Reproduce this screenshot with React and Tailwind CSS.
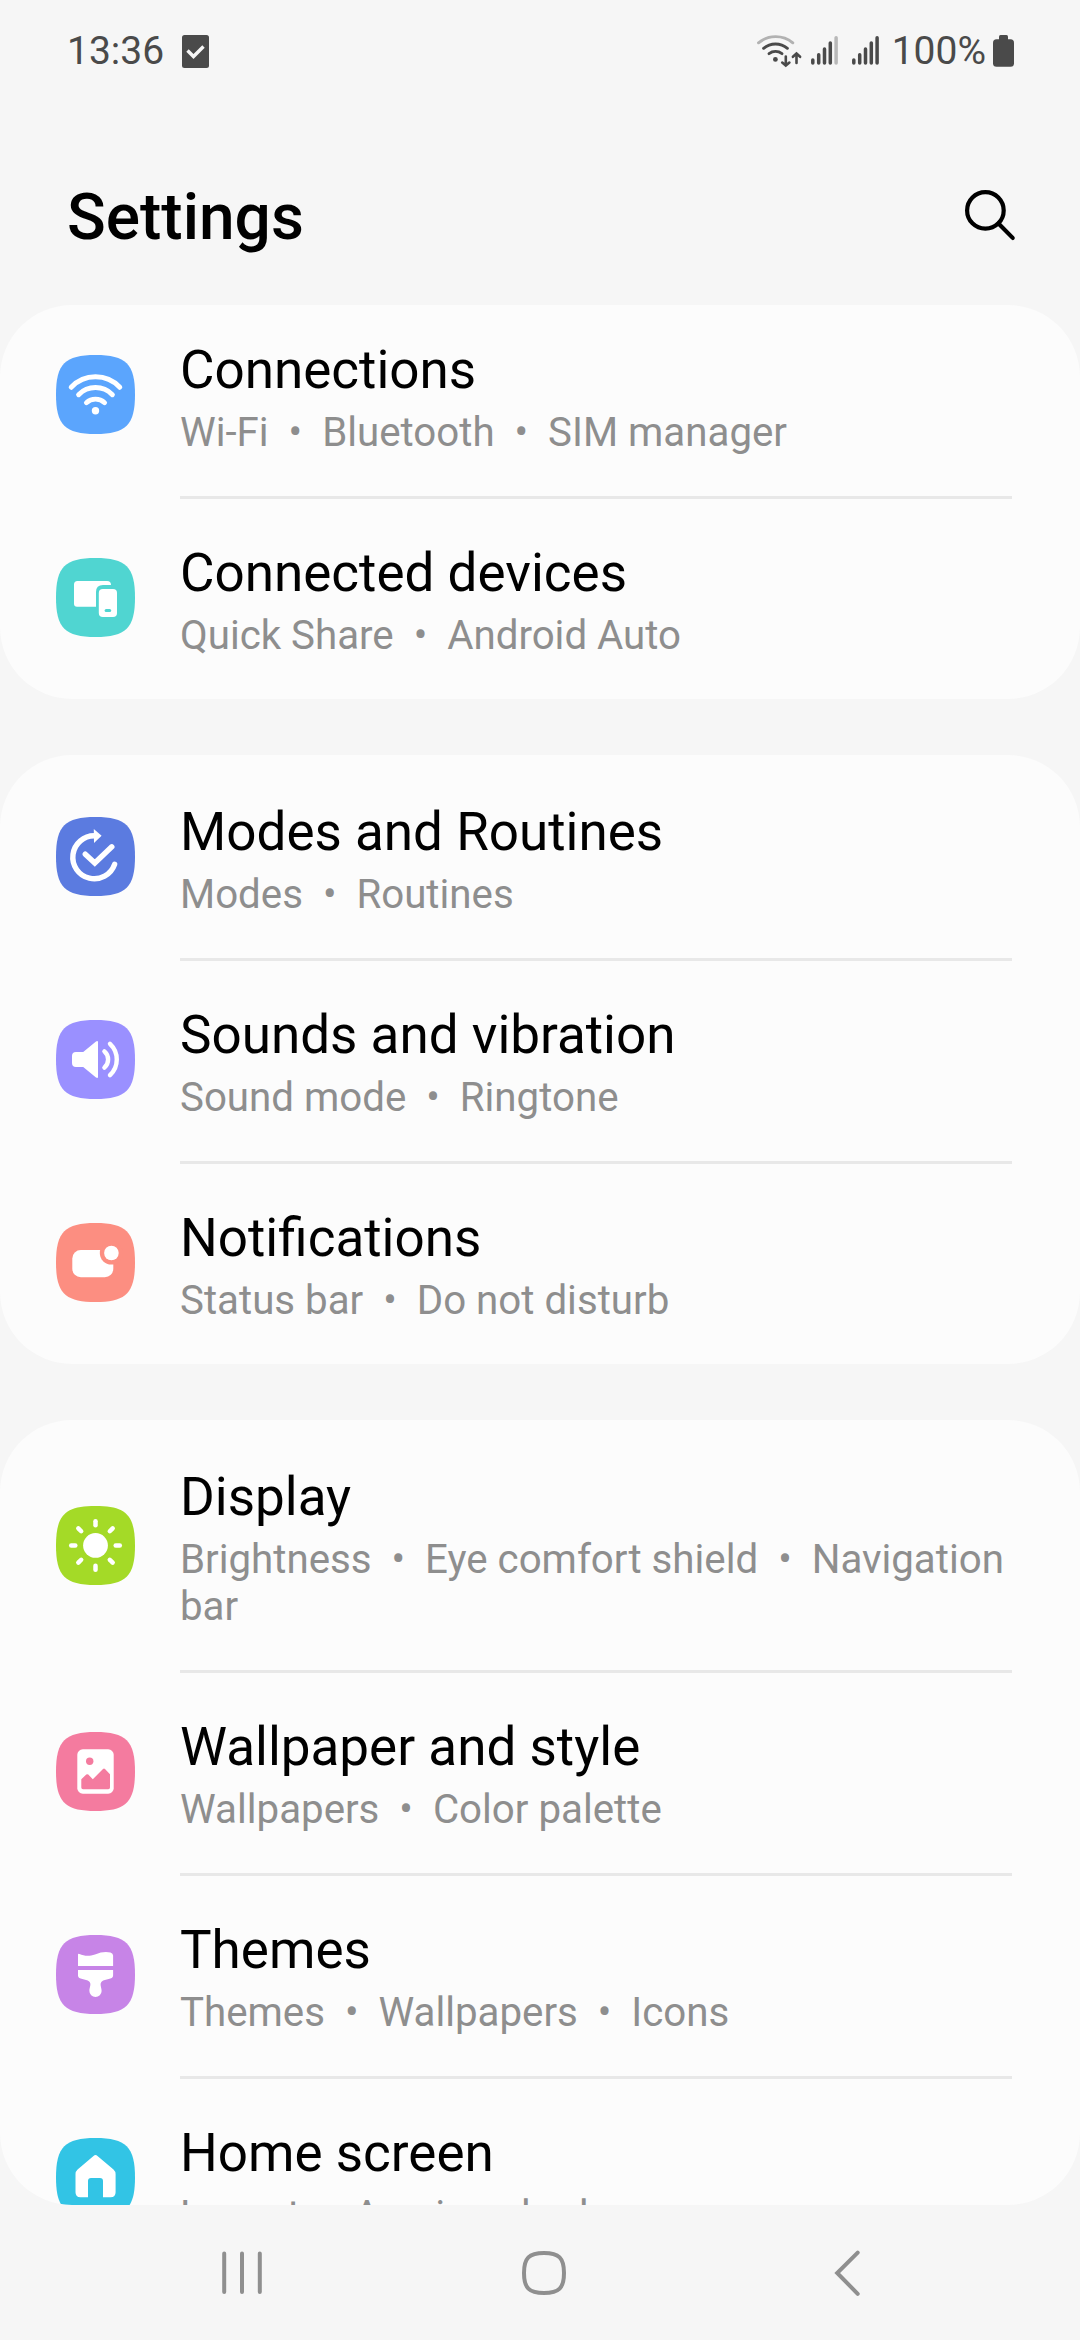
const SECTIONS = [
  {
    id: 'connections',
    items: [
      { title: 'Connections', tags: ['Wi-Fi', 'Bluetooth', 'SIM manager'], color: 'text-[#5ba5fd]', icon: WifiGlyph },
      { title: 'Connected devices', tags: ['Quick Share', 'Android Auto'], color: 'text-[#50d5d1]', icon: DevicesGlyph },
    ],
  },
  {
    id: 'modes',
    items: [
      { title: 'Modes and Routines', tags: ['Modes', 'Routines'], color: 'text-[#5b7be0]', icon: RoutineGlyph },
      { title: 'Sounds and vibration', tags: ['Sound mode', 'Ringtone'], color: 'text-[#9a90ff]', icon: SoundGlyph },
      { title: 'Notifications', tags: ['Status bar', 'Do not disturb'], color: 'text-[#fc8e81]', icon: NotificationGlyph },
    ],
  },
  {
    id: 'display',
    items: [
      { title: 'Display', tags: ['Brightness', 'Eye comfort shield', 'Navigation bar'], color: 'text-[#a4da27]', icon: SunGlyph },
      { title: 'Wallpaper and style', tags: ['Wallpapers', 'Color palette'], color: 'text-[#f47b9f]', icon: WallpaperGlyph },
      { title: 'Themes', tags: ['Themes', 'Wallpapers', 'Icons'], color: 'text-[#c784e7]', icon: BrushGlyph },
      { title: 'Home screen', tags: ['Layout', 'App icon badges'], color: 'text-[#32c4e5]', icon: HomeGlyph },
    ],
  },
];

// The glyphs share a 79x79 box. currentColor is the tile colour, used for cut-outs.

function WifiGlyph() {
  return (
    <>
      <g fill="none" stroke="#fff" strokeWidth="4.9" strokeLinecap="round">
        <path d="M15.2 32.3A33.4 33.4 0 0 1 63.8 32.3" />
        <path d="M22.6 39.7A23.6 23.6 0 0 1 56.4 39.7" />
        <path d="M30.4 47.7A13.4 13.4 0 0 1 48.6 47.7" />
      </g>
      <circle cx="39.5" cy="55.7" r="3.7" fill="#fff" />
    </>
  );
}

function DevicesGlyph() {
  return (
    <>
      <path fill="#fff" d="M21.5 23H51q4 0 4 4h-8q-7 0-7 7v14.7H21q-3 0-3-3V26.5q0-3.5 3.5-3.5z" />
      <rect x="42.8" y="31" width="18.2" height="28" rx="4" fill="#fff" />
      <rect x="48.6" y="51" width="6.6" height="3" rx="1.5" fill="currentColor" />
    </>
  );
}

function RoutineGlyph() {
  return (
    <>
      <g fill="none" stroke="#fff" strokeWidth="5.4" strokeLinecap="round">
        <path d="M39 18.8A21.5 21.5 0 1 0 58.6 47.4" />
        <path d="M29.3 37.2L38.8 46L55.8 29.8" />
      </g>
      <path d="M37.8 12L45.6 18.8L38 26z" fill="#fff" />
    </>
  );
}

function SoundGlyph() {
  return (
    <>
      <path fill="#fff" d="M20 32h7.2L40 21.5q2-1.2 2 .8v34.4q0 2-2 .8L27.2 47H20q-4 0-4-4v-7q0-4 4-4z" />
      <g fill="none" stroke="#fff" strokeWidth="4.4" strokeLinecap="round">
        <path d="M48.4 31.4A10.7 10.7 0 0 1 48.4 47.6" />
        <path d="M54 23.8A21.6 21.6 0 0 1 54 55.2" />
      </g>
    </>
  );
}

function NotificationGlyph() {
  return (
    <>
      <rect x="16.3" y="27" width="41" height="27.2" rx="8.5" fill="#fff" />
      <circle cx="55.4" cy="30" r="11.6" fill="currentColor" />
      <circle cx="55.4" cy="30" r="7.3" fill="#fff" />
    </>
  );
}

function SunGlyph() {
  return (
    <>
      <circle cx="39.5" cy="39.4" r="12.4" fill="#fff" />
      <g stroke="#fff" strokeWidth="4.5" strokeLinecap="round">
        {[0, 45, 90, 135, 180, 225, 270, 315].map((deg) => (
          <line key={deg} x1="39.5" y1="15.2" x2="39.5" y2="19.3" transform={`rotate(${deg} 39.5 39.5)`} />
        ))}
      </g>
    </>
  );
}

function WallpaperGlyph() {
  return (
    <>
      <rect x="21.3" y="17.3" width="36.4" height="44.4" rx="5.5" fill="#fff" />
      <circle cx="33.7" cy="29.2" r="3.7" fill="currentColor" />
      <path
        fill="currentColor"
        d="M25.3 47.2L30.3 42.6Q31.3 41.8 32.3 42.6L36.8 47.2L47 37Q48 36 49 37L54 42.3V55.5Q54 57.2 52.3 57.2H27Q25.3 57.2 25.3 55.5z"
      />
    </>
  );
}

function BrushGlyph() {
  return (
    <>
      <path fill="#fff" d="M22 19.5Q22 18.5 23.5 19C28 21 33 21.6 39 19.5C45 17 50 16.4 54.5 17.6Q57.1 18.4 57.1 20.5V31H22z" />
      <path
        fill="#fff"
        d="M22 35H57.1V40.5C57.1 45 49 43.4 45.8 46.6C43.2 49.4 45.6 52 45.6 56A6.1 6.1 0 0 1 33.4 56C33.4 52 35.8 49.4 33.2 46.6C30 43.4 22 45 22 40.5z"
      />
    </>
  );
}

function HomeGlyph() {
  return (
    <path
      fill="#fff"
      d="M37.5 18Q39.5 16.2 41.5 18L57.5 31.6Q59.6 33.6 59.6 36V54.3Q59.6 59.3 54.6 59.3H47V43Q47 40 44 40H35Q32 40 32 43V59.3H24.5Q19.5 59.3 19.5 54.3V36Q19.5 33.6 21.6 31.6z"
    />
  );
}

function StatusBar() {
  return (
    <div className="flex h-[102px] items-center pl-[67px] pr-[66px] text-[39px] leading-[46px] text-[#4a4a4a]">
      <span className="mb-px w-[115px]">13:36</span>
      <svg className="mt-px h-[33px] w-[27px]" viewBox="0 0 27 33">
        <rect width="27" height="33" rx="2.5" fill="currentColor" />
        <path d="M5.5 15.5L11.5 21.5L21.5 11.5" fill="none" stroke="#f6f6f6" strokeWidth="3.4" />
      </svg>

      <svg className="ml-auto h-[102px] w-[136px]" viewBox="34 0 136 102">
        <g fill="none" stroke="currentColor" strokeWidth="2.9" strokeLinecap="round">
          <path d="M36.5 42.8A27 27 0 0 1 70.8 42.8" stroke="#b2b2b2" />
          <path d="M41.6 48.3A18.5 18.5 0 0 1 65.4 48.3" />
          <path d="M47 53.6A11 11 0 0 1 60 53.6" />
          <path d="M63.8 56.5V65.2M60.2 62.6L63.8 65.6L67.4 62.6" strokeWidth="2.6" />
          <path d="M74.5 63V54M70.9 56.8L74.5 53.6L78.1 56.8" strokeWidth="2.6" />
        </g>
        <circle cx="53.4" cy="59.4" r="2.4" fill="currentColor" />
        <g stroke="currentColor" strokeWidth="3.5" strokeLinecap="round">
          <path d="M90.8 60V63M96.7 54.8V63M102.5 49V63M108.3 43V63" />
          <path d="M114.1 37.7V63" stroke="#b8b8b8" />
          <path d="M131.8 60V63M137.7 54.8V63M143.5 49V63M149.3 43V63M155.1 37.7V63" />
        </g>
      </svg>
      <span className="mb-px">100%</span>
      <svg className="ml-[7px] h-[32px] w-[21px]" viewBox="0 0 21 32">
        <rect x="6" width="9" height="8" rx="1.5" fill="currentColor" />
        <rect y="4.3" width="21" height="27.5" rx="3.5" fill="currentColor" />
      </svg>
    </div>
  );
}

function Header() {
  return (
    <header className="flex h-[203px] items-start justify-between pl-[67px] pr-[63px]">
      <h1 className="mt-[78px] text-[64px] font-medium leading-[76px] text-black">Settings</h1>
      <svg className="mt-[86px] h-[54px] w-[54px]" viewBox="0 0 54 54" fill="none" stroke="#000" strokeWidth="4.2" strokeLinecap="round">
        <circle cx="22.4" cy="22.4" r="18.3" />
        <path d="M35.5 35.5L49.7 49.9" />
      </svg>
    </header>
  );
}

function SettingsRow({ item }) {
  const Glyph = item.icon;
  return (
    <div className="flex pl-14">
      <div className="flex w-[124px] items-center pb-[3px]">
        <svg className={`h-[79px] w-[79px] ${item.color}`} viewBox="0 0 79 79">
          <path fill="currentColor" d="M39.5 0C70 0 79 9 79 39.5S70 79 39.5 79S0 70 0 39.5S9 0 39.5 0z" />
          <Glyph />
        </svg>
      </div>
      <div className="w-[832px] pb-10 pt-[43px]">
        <h2 className="text-[53px] leading-[62px] text-black">{item.title}</h2>
        <p className="mt-2 whitespace-pre-wrap text-[40.25px] leading-[47px] text-[#8e8e8e]">{item.tags.join('  •  ')}</p>
      </div>
    </div>
  );
}

function NavigationBar() {
  return (
    <nav className="flex h-[135px] items-center pl-[222px] pt-px text-[#8f8f8f]">
      <svg className="h-[44px] w-[40px]" viewBox="0 0 40 44" stroke="currentColor" strokeWidth="4" strokeLinecap="round">
        <path d="M2.2 2.6V41M20 2.6V41M37.8 2.6V41" />
      </svg>
      <svg className="ml-[260px] h-[44px] w-[44px]" viewBox="0 0 44 44" fill="none" stroke="currentColor" strokeWidth="4">
        <path d="M22 2C37 2 42 7 42 22S37 42 22 42S2 37 2 22S7 2 22 2z" />
      </svg>
      <svg className="ml-[268px] h-[46px] w-[27px]" viewBox="0 0 27 46" fill="none" stroke="currentColor" strokeWidth="4" strokeLinecap="round">
        <path d="M23.7 2.6L3.2 23L23.7 43.8" />
      </svg>
    </nav>
  );
}

export default function App() {
  return (
    <div className="flex h-[2340px] w-[1080px] flex-col overflow-hidden bg-[#f6f6f6] font-['Roboto',sans-serif]">
      <StatusBar />
      <Header />
      {/* Scrolled list, 9px of the first row is out of view */}
      <main className="h-[1900px] overflow-hidden rounded-[72px]">
        <div className="-mt-3 flex flex-col gap-14">
          {SECTIONS.map((section) => (
            <section key={section.id} className="rounded-[72px] bg-[#fcfcfc] pt-[3px]">
              {section.items.map((item, i) => (
                <div key={item.title}>
                  {i > 0 && <div className="ml-[180px] mr-[68px] h-[3px] bg-[#e8e8e8]" />}
                  <SettingsRow item={item} />
                </div>
              ))}
            </section>
          ))}
        </div>
      </main>
      <NavigationBar />
    </div>
  );
}
